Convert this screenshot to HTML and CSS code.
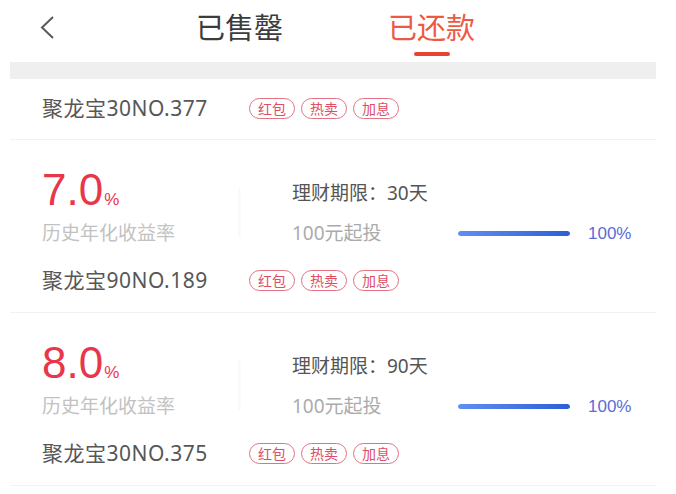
FILE: index.html
```html
<!DOCTYPE html>
<html lang="zh-CN">
<head>
<meta charset="utf-8">
<title>已还款</title>
<link rel="stylesheet" href="styles.css">
</head>
<body>
<header class="header">
  <svg class="back" width="16" height="24" viewBox="0 0 16 24"><polyline points="13,1 2,11.5 13,22" fill="none" stroke="#5a5a5a" stroke-width="2"/></svg>
  <nav class="tabs">
    <div class="tab"><span class="tab-text">已售罄</span></div>
    <div class="tab active"><span class="tab-text">已还款</span><span class="tab-line"></span></div>
  </nav>
</header>
<div class="gap-bar"></div>
<main class="list">
  <section class="item simple">
    <div class="name-row">
      <span class="name">聚龙宝30NO.377</span>
      <span class="tag">红包</span><span class="tag">热卖</span><span class="tag">加息</span>
    </div>
  </section>
  <section class="item card">
    <div class="info">
      <div class="rate">7.0<span class="pct">%</span></div>
      <div class="divider"></div>
      <div class="term">理财期限：30天</div>
      <div class="label">历史年化收益率</div>
      <div class="invest-row">
        <span class="invest">100元起投</span>
        <span class="bar"><span class="bar-fill" style="width:100%"></span></span>
        <span class="percent">100%</span>
      </div>
    </div>
    <div class="name-row">
      <span class="name">聚龙宝90NO.189</span>
      <span class="tag">红包</span><span class="tag">热卖</span><span class="tag">加息</span>
    </div>
  </section>
  <section class="item card">
    <div class="info">
      <div class="rate">8.0<span class="pct">%</span></div>
      <div class="divider"></div>
      <div class="term">理财期限：90天</div>
      <div class="label">历史年化收益率</div>
      <div class="invest-row">
        <span class="invest">100元起投</span>
        <span class="bar"><span class="bar-fill" style="width:100%"></span></span>
        <span class="percent">100%</span>
      </div>
    </div>
    <div class="name-row">
      <span class="name">聚龙宝30NO.375</span>
      <span class="tag">红包</span><span class="tag">热卖</span><span class="tag">加息</span>
    </div>
  </section>
</main>
</body>
</html>
```
FILE: styles.css
```css
html, body {
  margin: 0;
  padding: 0;
  background: #fff;
}
body {
  width: 676px;
  height: 494px;
  overflow: hidden;
  font-family: "Noto Sans", "Noto Sans CJK SC", sans-serif;
  color: #555;
}
.header {
  height: 62px;
  box-sizing: border-box;
  display: flex;
  align-items: flex-start;
  padding: 12px 0 0 40px;
}
.back {
  display: block;
  margin-top: 4px;
}
.tabs {
  display: flex;
  gap: 105px;
  margin-left: 140px;
}
.tab {
  display: flex;
  flex-direction: column;
  align-items: center;
}
.tab-text {
  font-family: "Noto Sans CJK SC", sans-serif;
  font-size: 29px;
  line-height: 29px;
  color: #3c3c3c;
}
.tab.active .tab-text {
  color: #ec5a45;
}
.tab-line {
  width: 36px;
  height: 4px;
  border-radius: 2px;
  background: #e8432f;
  margin-top: 11px;
}
.gap-bar {
  height: 17px;
  margin: 0 20px 0 10px;
  background: #efefef;
}
.list {
  margin: 0 20px 0 10px;
}
.item {
  border-bottom: 1px solid #f2f2f2;
  padding-left: 32px;
}
.item.simple {
  padding-top: 18px;
  padding-bottom: 20px;
}
.item.card {
  padding-top: 28px;
  padding-bottom: 21px;
}
.name-row {
  display: flex;
  align-items: center;
  height: 22px;
}
.name {
  width: 207px;
  font-size: 21px;
  line-height: 22px;
  letter-spacing: 0.5px;
  color: #575757;
  white-space: nowrap;
}
.tag {
  box-sizing: border-box;
  height: 21px;
  padding: 0 8px;
  margin-right: 6px;
  border: 1.5px solid #e37282;
  border-radius: 11px;
  font-family: "Noto Sans CJK SC", sans-serif;
  font-size: 14px;
  line-height: 18px;
  color: #de4e66;
}
.info {
  display: grid;
  grid-template-columns: 196px 3px 1fr;
  grid-template-rows: 56px 19px;
  margin-bottom: 26px;
}
.rate {
  grid-column: 1;
  grid-row: 1;
  font-family: "Liberation Sans", sans-serif;
  font-size: 44px;
  line-height: 44px;
  color: #e8374a;
}
.pct {
  font-size: 17px;
  margin-left: 1px;
}
.divider {
  grid-column: 2;
  grid-row: 1 / 3;
  margin: 20px 0 6px;
  background: linear-gradient(90deg, rgba(247,247,247,0), #f7f7f7, rgba(247,247,247,0));
}
.term {
  grid-column: 3;
  grid-row: 1;
  align-self: end;
  margin: 0 0 21px 51px;
  font-size: 19px;
  line-height: 19px;
  color: #555;
}
.label {
  grid-column: 1;
  grid-row: 2;
  font-size: 19px;
  line-height: 19px;
  color: #c2c2c2;
  white-space: nowrap;
}
.invest-row {
  grid-column: 3;
  grid-row: 2;
  display: flex;
  align-items: center;
  margin-left: 51px;
}
.invest {
  width: 166px;
  font-size: 19px;
  line-height: 19px;
  color: #ababab;
}
.bar {
  display: block;
  width: 112px;
  height: 5px;
  border-radius: 3px;
  background: #e6ecfa;
  overflow: hidden;
}
.bar-fill {
  display: block;
  height: 100%;
  border-radius: 3px;
  background: linear-gradient(90deg, #5f8ff0, #2d5ed8);
}
.percent {
  margin-left: 18px;
  font-family: "Liberation Sans", sans-serif;
  font-size: 17px;
  line-height: 19px;
  color: #5a6cd8;
}
```
